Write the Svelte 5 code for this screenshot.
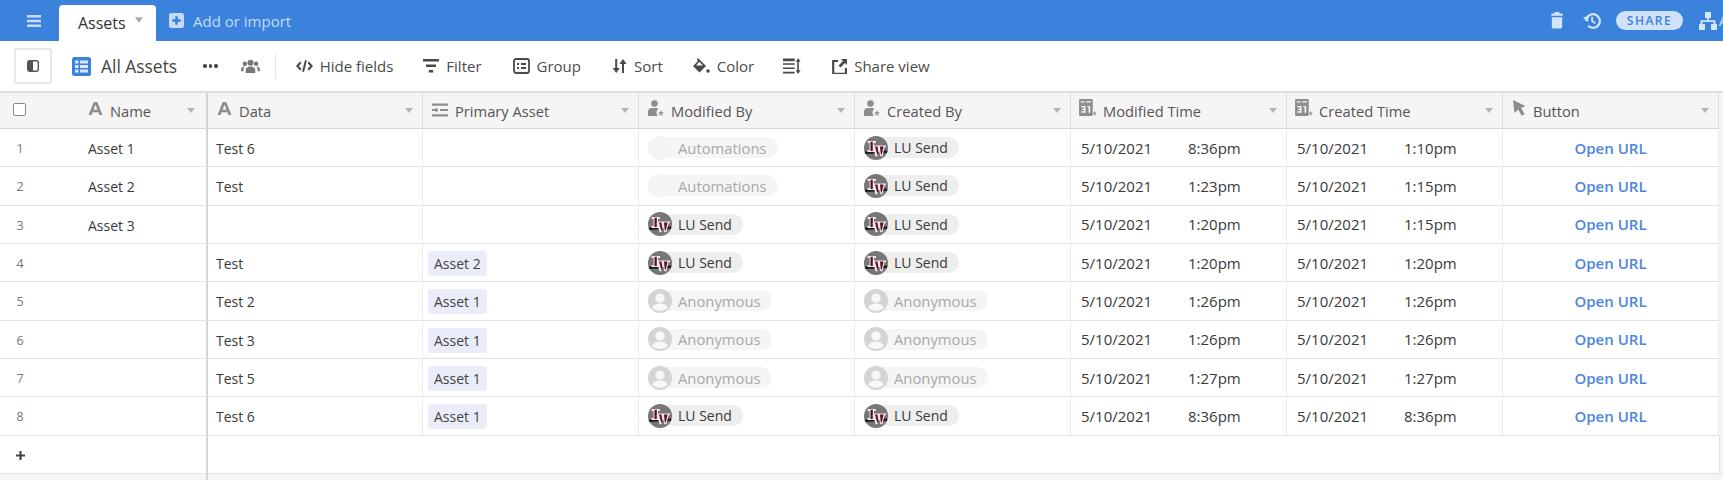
<script>
  const columns = [
    { label: "Data", icon: "text" },
    { label: "Primary Asset", icon: "link" },
    { label: "Modified By", icon: "user" },
    { label: "Created By", icon: "user" },
    { label: "Modified Time", icon: "cal" },
    { label: "Created Time", icon: "cal" },
    { label: "Button", icon: "cursor" },
  ];

  const lu = { name: "LU Send", kind: "lu" };
  const bot = { name: "Automations", kind: "bot" };
  const anon = { name: "Anonymous", kind: "anon" };

  const rows = [
    { name: "Asset 1", data: "Test 6", link: "", mod: bot, by: lu, mt: "8:36pm", ct: "1:10pm" },
    { name: "Asset 2", data: "Test", link: "", mod: bot, by: lu, mt: "1:23pm", ct: "1:15pm" },
    { name: "Asset 3", data: "", link: "", mod: lu, by: lu, mt: "1:20pm", ct: "1:15pm" },
    { name: "", data: "Test", link: "Asset 2", mod: lu, by: lu, mt: "1:20pm", ct: "1:20pm" },
    { name: "", data: "Test 2", link: "Asset 1", mod: anon, by: anon, mt: "1:26pm", ct: "1:26pm" },
    { name: "", data: "Test 3", link: "Asset 1", mod: anon, by: anon, mt: "1:26pm", ct: "1:26pm" },
    { name: "", data: "Test 5", link: "Asset 1", mod: anon, by: anon, mt: "1:27pm", ct: "1:27pm" },
    { name: "", data: "Test 6", link: "Asset 1", mod: lu, by: lu, mt: "8:36pm", ct: "8:36pm" },
  ];
</script>

{#snippet fieldIcon(kind)}
  {#if kind === "text"}
    <svg class="ficon f-text" viewBox="0 0 16 16"><path d="M6.200 1h3.600L15.500 15h-3.300l-1.100-3H4.900l-1.100 3H.5zM5.900 9.300h4.200L8 3.800z" /></svg>
  {:else if kind === "link"}
    <svg class="ficon f-link" viewBox="0 0 16 14"><path d="M0 .5h16v2.200H0zM0 11.300h16v2.200H0zM8 5.900h8v2.200H8zM0 5.900h3.600V4.300L6.600 7 3.600 9.700V8.100H0z" /></svg>
  {:else if kind === "user"}
    <svg class="ficon f-user" viewBox="0 0 16 17"><circle cx="6.500" cy="3.600" r="3.300" /><path d="M0 16v-4.500C0 9.300 1.800 8 4 8h4.200c.9 0 1.700.3 2.300.8-1.200.9-2 2.300-2 3.800 0 1.300.5 2.500 1.300 3.400zM13 10l.8 2.200H16l-1.800 1.300.7 2.500-1.900-1.500-1.900 1.500.7-2.500-1.800-1.300h2.200z" /></svg>
  {:else if kind === "cal"}
    <svg class="ficon f-cal" viewBox="0 0 18 17"><path fill-rule="evenodd" d="M2 0h11a1 1 0 0 1 1 1v14a1 1 0 0 1-1 1H2a1 1 0 0 1-1-1V1a1 1 0 0 1 1-1zM2.500 2v1.200h4V2zM8 2v1.200h4.500V2zM3 6.500v1.400h2.600v1.200H4v1.200h1.600v1.300H3v1.400h4.100V6.500zM9 6.500v1.400h1v5h1.500V6.500z" /><path d="M15.500 11l.6 1.700H18l-1.500 1 .5 2.300-1.500-1.400-1 .4.500-1.500-.8-.8h.9z" /></svg>
  {:else}
    <svg class="ficon f-cursor" viewBox="0 0 14 16"><path d="M1 0l12.500 6-4.300 2 3.400 6.200-3 1.500L6.300 9.500 2.500 13z" /></svg>
  {/if}
{/snippet}

{#snippet caret()}
  <svg class="caret" viewBox="0 0 10 6"><path d="M0 0h10L5 6z" /></svg>
{/snippet}

{#snippet person(p)}
  <span class="person {p.kind}">
    <span class="avatar">
      {#if p.kind === "lu"}
        <svg viewBox="0 0 24 24">
          <circle cx="12" cy="12" r="12" fill="#777" />
          <path d="M.6 15.500L23.400 14.500 23 17 1.300 18z" fill="#1c1c1c" />
          <path d="M3.500 5h8.500v2H10v6.500h2.500V11.500h1.500V16H3.500v-2H5.500V7h-2z" fill="#f0e8ea" />
          <path d="M6.500 5.800h2.300v9.200H6.500z" fill="#5e1029" />
          <path d="M10 9.500h12v1.800h-1.500l-2 9h-2L15 15.500l-1.700 4.800h-2L9.500 11.300H8.500z" fill="#f0e8ea" />
          <path d="M11 10.500h2.500l1 7-1.200 1.500zM16 10.500h3.500l-1.800 8.500-1-1.500z" fill="#5e1029" />
        </svg>
      {:else if p.kind === "anon"}
        <svg viewBox="0 0 24 24">
          <circle cx="12" cy="12" r="12" fill="#d4d4d4" />
          <circle cx="12" cy="9" r="4.600" fill="#f7f7f7" />
          <path d="M4 19c1.500-3.500 4.500-4.500 8-4.500s6.500 1 8 4.500a12 12 0 0 1-16 0z" fill="#f7f7f7" />
        </svg>
      {:else}
        <svg viewBox="0 0 24 24"><circle cx="12" cy="12" r="12" fill="#f5f5f5" /></svg>
      {/if}
    </span>
    <span class="pname">{p.name}</span>
  </span>
{/snippet}

<div class="page">
  <header class="topbar">
    <div class="top-left">
      <svg class="menu" viewBox="0 0 14 12"><path d="M0 0h14v2.400H0zM0 4.800h14v2.400H0zM0 9.600h14V12H0z" /></svg>
      <div class="tab">Assets <svg class="tabcaret" viewBox="0 0 10 7"><path d="M0 0h10L5 7z" /></svg></div>
      <svg class="add" viewBox="0 0 16 16"><path fill-rule="evenodd" d="M2.500 0h11A2.500 2.500 0 0 1 16 2.500v11a2.500 2.500 0 0 1-2.500 2.500h-11A2.500 2.500 0 0 1 0 13.500v-11A2.500 2.500 0 0 1 2.500 0zM6.700 3.500v3.200H3.500v2.600h3.200v3.200h2.600V9.300h3.200V6.700H9.300V3.500z" /></svg>
      <span class="addlabel">Add or import</span>
    </div>
    <div class="top-right">
      <svg class="trash" viewBox="0 0 12 18"><path d="M3.500 0h5v1.500h3.500v2.500H0V1.500h3.500zM0.500 5.500h11V15.500A2 2 0 0 1 9.500 17.500h-7a2 2 0 0 1-2-2z" /></svg>
      <svg class="history" viewBox="0 0 18 18"><path fill="none" stroke="currentColor" stroke-width="2.200" d="M3.200 9a6.800 6.800 0 1 1 2 4.800" /><path d="M0 5.500l5.800-1.500L5 10zM8.200 4.800h1.800v4l2.800 1.800-1 1.400-3.600-2.400z" /></svg>
      <span class="share">SHARE</span>
      <svg class="apps" viewBox="0 0 18 18"><path d="M6 0h6v6h-2v2.200h6.500V12H18v6h-6v-6h2.500V10h-11v2H6v6H0v-6h1.500V8.200H8V6H6z" /></svg>
      <span class="autolabel">Automations</span>
    </div>
  </header>

  <div class="toolbar">
    <button class="sidebtn" aria-label="Toggle sidebar">
      <svg viewBox="0 0 12 12"><rect x=".7" y=".7" width="10.600" height="10.600" rx="2" fill="#fff" stroke="#555" stroke-width="1.400" /><path d="M2 1h4v10H2.500A1.500 1.500 0 0 1 1 9.500v-7A1.500 1.500 0 0 1 2.500 1z" fill="#555" /></svg>
    </button>
    <svg class="gridicon" viewBox="0 0 19 19"><rect width="19" height="19" rx="2.500" fill="#3b82dc" /><path d="M3 3.500h3.500v3H3zM8 3.500h8v3H8zM3 8h3.500v3H3zM8 8h8v3H8zM3 12.500h3.500v3H3zM8 12.500h8v3H8z" fill="#dbe9fa" /></svg>
    <span class="viewname">All Assets</span>
    <span class="dots"><i></i><i></i><i></i></span>
    <svg class="people" viewBox="0 0 20 16"><circle cx="10" cy="4" r="3.200" /><circle cx="4" cy="5" r="2.400" /><circle cx="16" cy="5" r="2.400" /><path d="M5 15v-3.500C5 9.500 7 8 10 8s5 1.500 5 3.500V15zM0 13v-2.500C0 9 1.500 8 3.500 8c-.7.800-1 2-1 3.500V13zM20 13v-2.500C20 9 18.500 8 16.500 8c.7.800 1 2 1 3.500V13z" /></svg>
    <span class="divider"></span>

    <span class="tool t-hide">
      <svg viewBox="0 0 18 14" width="17" height="14"><path d="M5 3L1.500 7 5 11M13 3l3.500 4L13 11" fill="none" stroke="currentColor" stroke-width="2.200" /><path d="M10.500 1L7.500 13" stroke="currentColor" stroke-width="2" /></svg>
      Hide fields
    </span>
    <span class="tool t-filter">
      <svg viewBox="0 0 16 14" width="16" height="14"><path d="M0 0h16v2.600H0zM3 5.500h10v2.600H3zM5.800 11h4.400v2.600H5.800z" /></svg>
      Filter
    </span>
    <span class="tool t-group">
      <svg viewBox="0 0 17 16" width="17" height="16"><rect x="1" y="1" width="15" height="14" rx="2" fill="none" stroke="currentColor" stroke-width="1.800" /><path d="M4 5h2v2H4zM8 5h5v2H8zM4 9h2v2H4zM8 9h5v2H8z" /></svg>
      Group
    </span>
    <span class="tool t-sort">
      <svg viewBox="0 0 15 14" width="15" height="14"><path d="M3.200 0h2v9h2.600L4.200 14 .6 9h2.600zM10 14h2V5h2.600L11 0 7.400 5H10z" /></svg>
      Sort
    </span>
    <span class="tool t-color">
      <svg viewBox="0 0 18 16" width="18" height="16"><path fill-rule="evenodd" d="M5 0l2 1L14 8l-6.500 6.500L1 8l4.500-4.500zM4 7.500h7L7.300 3.800z" /><circle cx="16" cy="13" r="1.800" /></svg>
      Color
    </span>
    <span class="tool t-height">
      <svg viewBox="0 0 17 15" width="18" height="16"><path d="M0 .5h11V3H0zM0 5h11v1.300H0zM0 9h11v1.300H0zM0 13h11v1.500H0zM13.500 3.500H12L14.300 0l2.300 3.500H15v8h1.600L14.300 15 12 11.500h1.500z" /></svg>
    </span>
    <span class="tool t-share">
      <svg viewBox="0 0 15 15" width="15" height="15"><path d="M6 2H1.200v12.800H14V9" fill="none" stroke="currentColor" stroke-width="2.200" /><path d="M9 0h6v6l-2-2-4.500 4.500-2-2L11 2z" /></svg>
      Share view
    </span>
  </div>

  <div class="grid">
    <div class="row head">
      <div class="namecell">
        <span class="checkbox"></span>
        <span class="namehead">
          {@render fieldIcon("text")}
          <span class="label">Name</span>
        </span>
        {@render caret()}
      </div>
      {#each columns as col}
        <div class="cell">
          {@render fieldIcon(col.icon)}
          <span class="label">{col.label}</span>
          {@render caret()}
        </div>
      {/each}
    </div>

    {#each rows as row, i}
      <div class="row">
        <div class="namecell">
          <span class="num">{i + 1}</span>
          <span class="nameval">{row.name}</span>
        </div>
        <div class="cell data">{row.data}</div>
        <div class="cell">
          {#if row.link}<span class="chip">{row.link}</span>{/if}
        </div>
        <div class="cell slim">{@render person(row.mod)}</div>
        <div class="cell slim">{@render person(row.by)}</div>
        <div class="cell time"><span class="date">5/10/2021</span><span>{row.mt}</span></div>
        <div class="cell time"><span class="date">5/10/2021</span><span>{row.ct}</span></div>
        <div class="cell btn"><span class="open">Open URL</span></div>
      </div>
    {/each}

    <div class="row addrow">
      <div class="namecell">
        <svg class="plus" viewBox="0 0 10 10"><path d="M3.800 0h2.400v3.800H10v2.400H6.200V10H3.800V6.200H0V3.800h3.800z" /></svg>
      </div>
      <div class="rest"></div>
    </div>
    <div class="foot"><div class="footleft"></div></div>
  </div>
</div>

<style>
  :global(body) {
    margin: 0;
    overflow: hidden;
    background: #f5f5f5;
  }

  .page {
    width: 1723px;
    height: 480px;
    overflow: hidden;
    font-family: "Open Sans", sans-serif;
    font-size: 14px;
    color: #3a3a3a;
  }

  .topbar {
    display: flex;
    align-items: flex-end;
    height: 41px;
    background: #3b82dc;
    overflow: hidden;
  }

  .top-left {
    display: flex;
    align-items: center;
    width: 1551px;
    height: 41px;
    flex-shrink: 0;
  }

  .menu {
    width: 14px;
    height: 12px;
    margin: 0 18px 0 27px;
    fill: #c6dcf6;
  }

  .tab {
    display: flex;
    align-items: center;
    box-sizing: border-box;
    width: 97px;
    height: 36px;
    margin-top: 5px;
    padding-left: 19px;
    background: #fff;
    border-radius: 4px 4px 0 0;
    font-size: 16px;
    color: #333;
  }

  .tabcaret {
    width: 8px;
    height: 6px;
    margin: -6px 0 0 9px;
    fill: #aaa;
  }

  .add {
    width: 15px;
    height: 15px;
    margin: -1px 0 0 13px;
    fill: #c6dcf6;
  }

  .addlabel {
    margin-left: 9px;
    font-size: 15px;
    color: #c6dcf6;
  }

  .top-right {
    display: flex;
    align-items: center;
    height: 41px;
    flex-shrink: 0;
    color: #d3e5fa;
  }

  .trash {
    width: 12px;
    height: 17px;
    fill: #d3e5fa;
  }

  .history {
    width: 18px;
    height: 18px;
    margin-left: 20px;
    fill: #d3e5fa;
  }

  .share {
    box-sizing: border-box;
    width: 67px;
    height: 19px;
    margin-left: 15px;
    border-radius: 10px;
    background: #cfe2f9;
    color: #3b82dc;
    font-size: 12px;
    font-weight: 600;
    letter-spacing: 1.500px;
    line-height: 19px;
    text-align: center;
  }

  .apps {
    width: 18px;
    height: 18px;
    margin-left: 16px;
    fill: #d3e5fa;
  }

  .autolabel {
    margin-left: 2px;
    font-size: 14px;
    white-space: nowrap;
  }

  .toolbar {
    display: flex;
    align-items: center;
    box-sizing: border-box;
    height: 50px;
    padding-left: 14px;
    background: #fff;
    color: #4a4a4a;
  }

  .sidebtn {
    display: flex;
    align-items: center;
    justify-content: center;
    width: 38px;
    height: 36px;
    padding: 0;
    background: #fff;
    border: 2px solid #e8e8e8;
    border-radius: 3px;
  }

  .sidebtn svg {
    width: 12px;
    height: 12px;
  }

  .gridicon {
    width: 19px;
    height: 19px;
    margin-left: 20px;
  }

  .viewname {
    margin-left: 10px;
    font-size: 17.400px;
    color: #444;
    white-space: nowrap;
  }

  .dots {
    display: flex;
    gap: 2px;
    margin-left: 26px;
  }

  .dots i {
    width: 3.500px;
    height: 3.500px;
    border-radius: 50%;
    background: #444;
  }

  .people {
    width: 19px;
    height: 15px;
    margin-left: 23px;
    fill: #777;
  }

  .divider {
    width: 1px;
    height: 26px;
    margin: 0 20px 0 15px;
    background: #e4e4e4;
  }

  .tool {
    display: flex;
    align-items: center;
    gap: 7px;
    font-size: 15px;
    color: #4a4a4a;
    white-space: nowrap;
    fill: #4a4a4a;
  }

  .t-filter { margin-left: 30px; }
  .t-group { margin-left: 31px; }
  .t-sort { margin-left: 31px; }
  .t-color { margin-left: 29px; }
  .t-height { margin-left: 29px; }
  .t-share { margin-left: 31px; }

  .grid {
    border-top: 2px solid #dedede;
    background: #f5f5f5;
  }

  .row {
    display: grid;
    grid-template-columns: 208px 215px repeat(6, 216px);
    width: 1719px;
    height: 38.330px;
    box-sizing: border-box;
    background: #fff;
    border-bottom: 1.500px solid #e2e2e2;
  }

  .row.head {
    height: 36px;
    background: #f5f5f5;
    border-bottom: 1.500px solid #d8d8d8;
    color: #555;
    font-size: 14.700px;
  }

  .namecell {
    position: relative;
    display: flex;
    align-items: center;
    border-right: 2px solid #d4d4d4;
  }

  .cell {
    display: flex;
    align-items: center;
    box-sizing: border-box;
    min-width: 0;
    padding: 0 10px;
    border-right: 1px solid #ececec;
    white-space: nowrap;
  }

  .row:not(.head) .namecell,
  .row:not(.head) .cell {
    padding-top: 2px;
  }

  .row:not(.head) .cell.slim,
  .row:not(.head) .cell.time,
  .row:not(.head) .cell.btn {
    padding-top: 0;
  }

  .cell.data {
    padding-left: 8px;
  }

  .head .cell {
    padding: 0 9px 0 9px;
    border-right-color: #dcdcdc;
  }

  .ficon {
    fill: #8d8d8d;
    flex-shrink: 0;
  }

  .f-text {
    width: 15px;
    height: 15px;
    margin-top: -4px;
  }

  .f-link {
    width: 16px;
    height: 14px;
    margin-top: -2px;
  }

  .f-user {
    width: 16px;
    height: 17px;
    margin-top: -4px;
  }

  .f-cal {
    width: 19px;
    height: 18px;
    margin: -6px -1px 0 -2px;
  }

  .f-cursor {
    width: 14px;
    height: 16px;
    margin-top: -5px;
  }

  .label {
    margin-left: 7px;
    flex: 1;
  }

  .caret {
    width: 8px;
    height: 5px;
    fill: #b4b4b4;
    flex-shrink: 0;
  }

  .head .namecell .caret {
    margin-left: auto;
    margin-right: 11px;
  }

  .checkbox {
    box-sizing: border-box;
    width: 13px;
    height: 13px;
    margin: 0 0 2px 13px;
    background: #fff;
    border: 1px solid #888;
    border-radius: 2px;
  }

  .namehead {
    display: flex;
    align-items: center;
    margin-left: 62px;
  }

  .num {
    width: 40px;
    text-align: center;
    font-size: 12.500px;
    color: #777;
  }

  .nameval {
    margin-left: 48px;
  }

  .chip {
    padding: 3px 6px;
    background: #eaedf9;
    border-radius: 3px;
    color: #444;
    margin-left: -5px;
  }

  .cell.slim {
    padding-left: 9px;
  }

  .person {
    display: flex;
    align-items: center;
    height: 21px;
    border-radius: 11px;
    background: #eee;
    padding-right: 11px;
  }

  .avatar {
    width: 24px;
    height: 24px;
    margin-right: 6px;
    flex-shrink: 0;
  }

  .avatar svg {
    display: block;
    width: 24px;
    height: 24px;
  }

  .person.bot,
  .person.anon {
    background: #f5f5f5;
    color: #a8a8a8;
    font-size: 14.800px;
  }

  .time {
    padding-left: 10px;
    font-size: 15px;
  }

  .date {
    width: 107px;
  }

  .btn {
    justify-content: center;
  }

  .open {
    color: #4c85e0;
    font-size: 15px;
    font-weight: 600;
  }

  .addrow {
    width: 1720px;
    height: 37px;
    grid-template-columns: 208px 1fr;
    border-bottom: 0;
  }

  .addrow .rest {
    border-right: 1px solid #e2e2e2;
  }

  .plus {
    width: 9px;
    height: 9px;
    margin-left: 16px;
    fill: #444;
  }

  .foot {
    height: 10px;
    border-top: 1.500px solid #e0e0e0;
  }

  .footleft {
    width: 206px;
    height: 10px;
    border-right: 2px solid #d4d4d4;
  }
</style>
